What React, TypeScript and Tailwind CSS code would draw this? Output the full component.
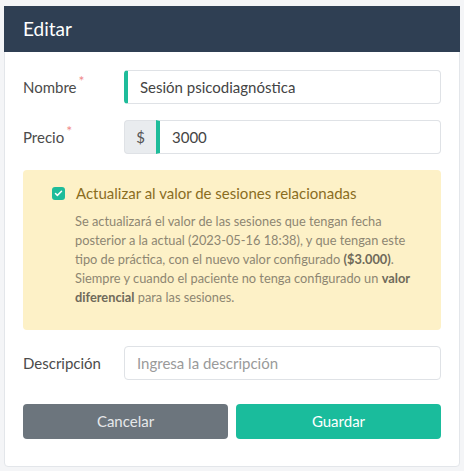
import { Check } from "lucide-react";

const font = { fontFamily: "Lato, 'Noto Sans', sans-serif" };

export default function App() {
  return (
    <div className="w-[464px] h-[471px] bg-[#f4f5f7] pt-[6px] px-[4px]" style={font}>
      <div className="bg-white border border-[#e3e6ea] rounded-b-[4px] h-[461px]">
        <div className="bg-[#2f3f53] h-[46px] flex items-center px-[19px] -mx-px -mt-px">
          <h1 className="text-white text-[19px]">Editar</h1>
        </div>

        <div className="px-[18px] pt-[18px]">
          <div className="flex items-center h-[34px]">
            <label className="w-[101px] text-[15px] text-[#4b4b4b]">
              Nombre<sup className="text-[#f08a8a] text-[14px] ml-[2px]">*</sup>
            </label>
            <div className="flex-1 h-[34px] border border-[#dfe2e6] border-l-[4px] border-l-[#1ebc9a] rounded-[4px] flex items-center pl-[12px] text-[15px] text-[#444]">
              Sesión psicodiagnóstica
            </div>
          </div>

          <div className="flex items-center h-[34px] mt-[16px]">
            <label className="w-[101px] text-[15px] text-[#4b4b4b]">
              Precio<sup className="text-[#f08a8a] text-[14px] ml-[2px]">*</sup>
            </label>
            <div className="flex-1 h-[34px] flex">
              <div className="w-[32px] bg-[#e9ecef] border border-[#dfe2e6] border-r-0 rounded-l-[4px] flex items-center justify-center text-[15px] text-[#555]">
                $
              </div>
              <div className="flex-1 border border-[#dfe2e6] border-l-[4px] border-l-[#1ebc9a] rounded-r-[4px] flex items-center pl-[12px] text-[15px] text-[#444]">
                3000
              </div>
            </div>
          </div>

          <div className="mt-[16px] bg-[#fdf1c7] rounded-[4px] h-[160px] pl-[29px] pr-[18px] pt-[12px]">
            <div className="flex items-center gap-[11px]">
              <span className="w-[13px] h-[13px] rounded-[3px] bg-[#1ebc9a] flex items-center justify-center">
                <Check size={9} strokeWidth={4} className="text-white" />
              </span>
              <span className="text-[15px] text-[#8a6d1f]">Actualizar al valor de sesiones relacionadas</span>
            </div>
            <p className="ml-[23px] mt-[7px] text-[12.8px] leading-[19px] text-[#8d8672]">
              Se actualizará el valor de las sesiones que tengan fecha posterior a la actual (2023-05-16 18:38), y que tengan este tipo de práctica, con el nuevo valor configurado <b className="text-[#6f6a5a] leading-[19px]">($3.000)</b>. Siempre y cuando el paciente no tenga configurado un <b className="text-[#6f6a5a] leading-[19px]">valor diferencial</b> para las sesiones.
            </p>
          </div>

          <div className="flex items-center h-[34px] mt-[16px]">
            <label className="w-[101px] text-[15px] text-[#4b4b4b]">Descripción</label>
            <input
              placeholder="Ingresa la descripción"
              className="flex-1 h-[34px] border border-[#dfe2e6] rounded-[4px] px-[12px] text-[15px] placeholder:text-[#9a9a9a] outline-none"
            />
          </div>

          <div className="flex gap-[8px] mt-[24px]">
            <button className="flex-1 h-[35px] bg-[#6c757d] text-[#e6e8ea] text-[15px] rounded-[4px]">
              Cancelar
            </button>
            <button className="flex-1 h-[35px] bg-[#1abc9c] text-white text-[15px] rounded-[4px]">
              Guardar
            </button>
          </div>
        </div>
      </div>
    </div>
  );
}
